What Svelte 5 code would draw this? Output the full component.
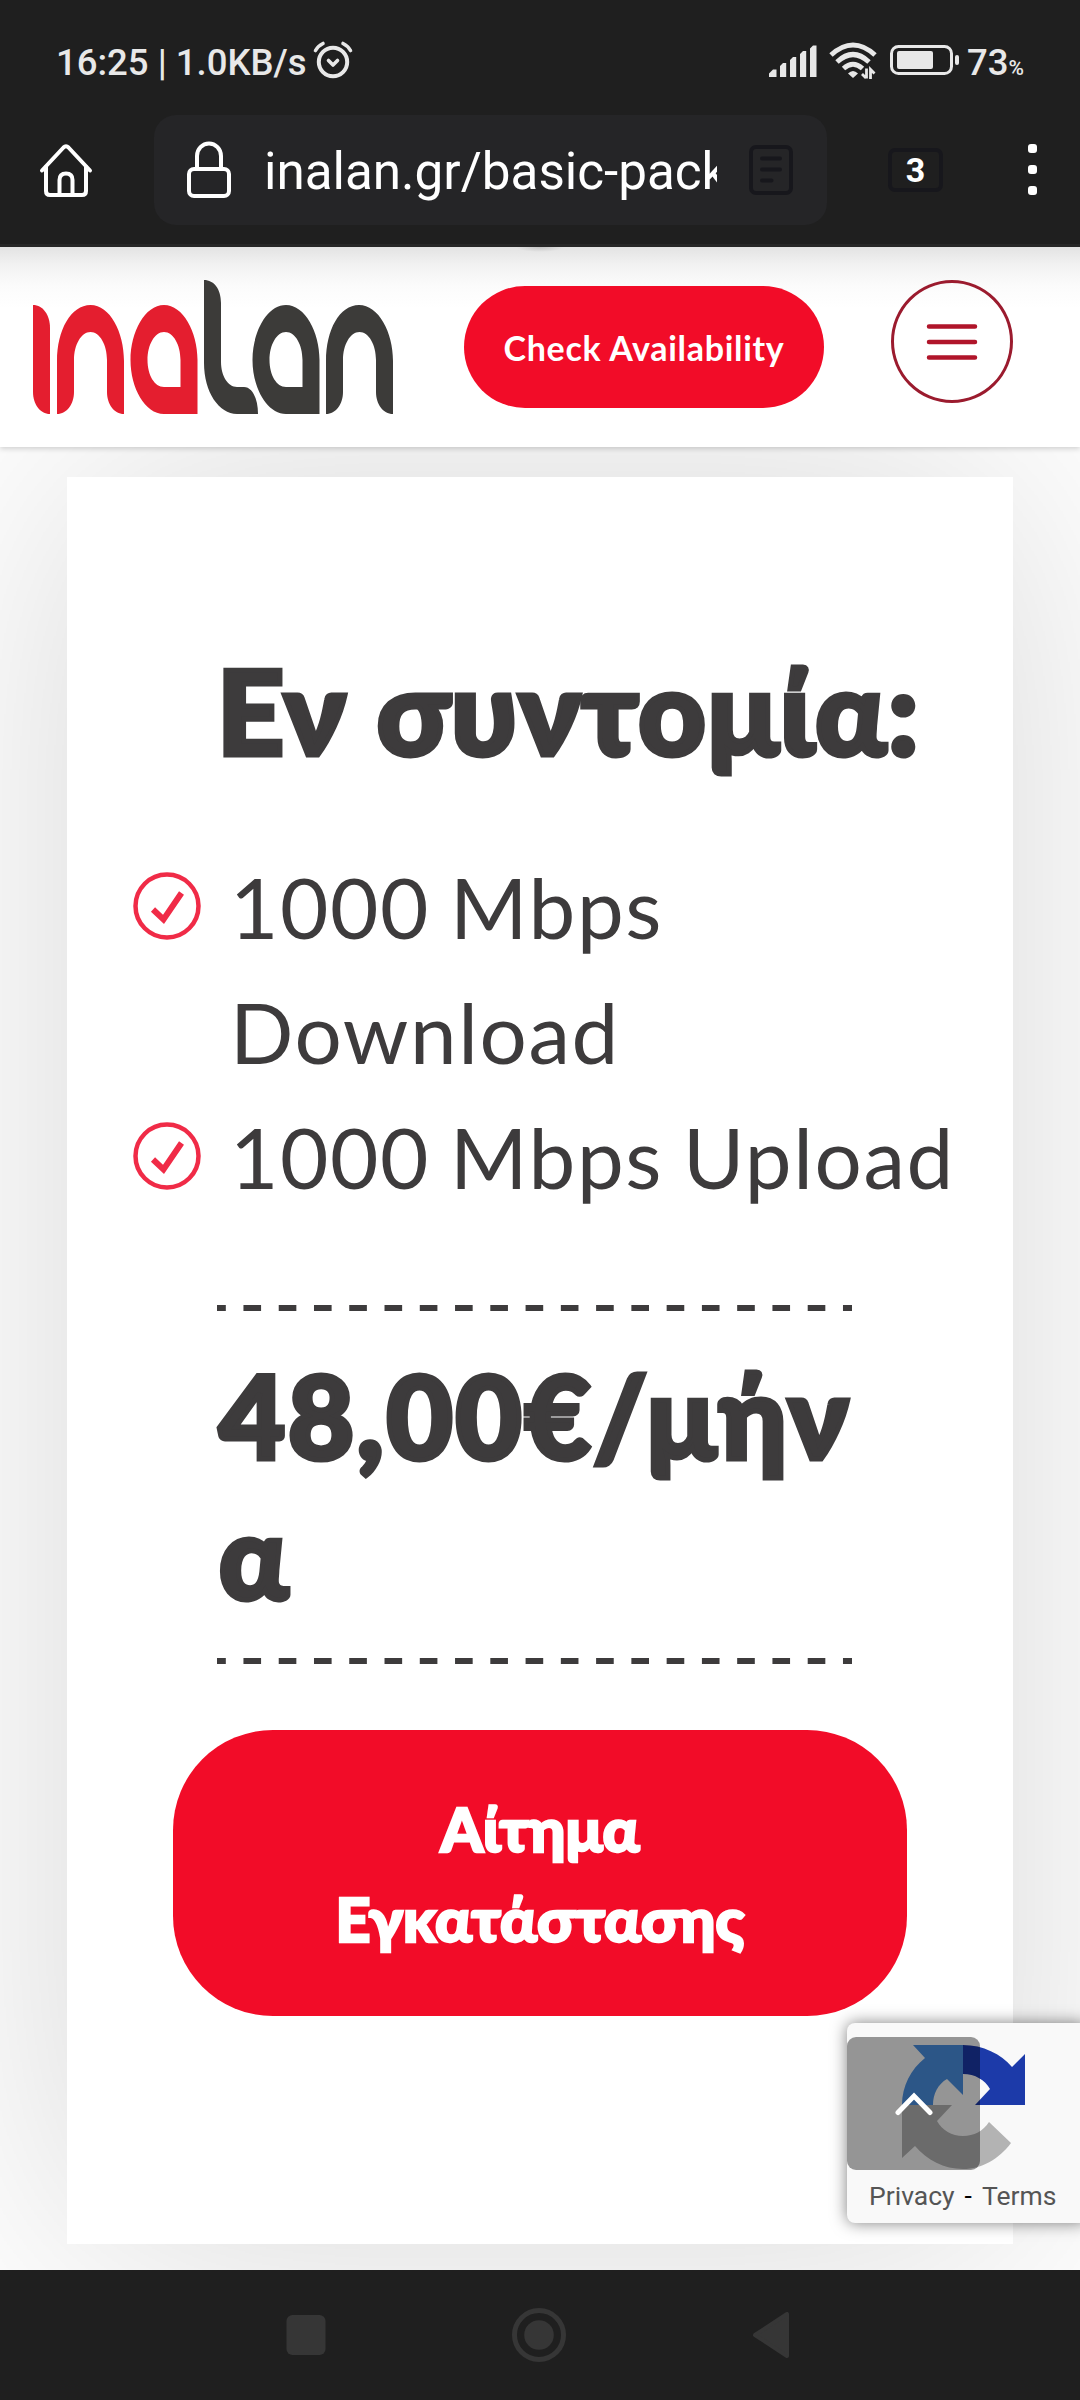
<script lang="ts">
	let url = $state('inalan.gr/basic-pack');
	let tabCount = $state(3);

	const features = ['1000 Mbps Download', '1000 Mbps Upload'];
</script>

<div class="screen">
	<div class="status-bar">
		<span class="clock">16:25 | 1.0KB/s</span>
		<svg class="alarm" width="40" height="38" viewBox="0 0 40 38" fill="none" stroke="#e8e8e8" stroke-linecap="round" stroke-linejoin="round">
			<circle cx="20" cy="21" r="14.2" stroke-width="4" />
			<path d="M15.5 19.5l4.5 4.5 4.5-4.5" stroke-width="3.6" />
			<path d="M2.5 9.5Q5 5 10 2.5M30 2.5Q35 5 37.5 9.5" stroke-width="3.6" />
		</svg>
		<span class="spacer"></span>
		<svg class="signal" width="48" height="32" viewBox="0 0 48 32" fill="#e8e8e8">
			<path d="M0 32v-3.5l4-4h3.5v7.5zM11 32V21l3-3h3.2v14zM21 32V15l3-3h3.2v20zM31 32V9l3-3h3.2v26zM41 32V3.5L44 .5h3.5V32z" />
		</svg>
		<svg class="wifi" width="48" height="37" viewBox="0 0 48 37" fill="none" stroke="#e8e8e8" stroke-width="5">
			<path d="M2 13Q24-7 46 13" />
			<path d="M8 20Q24 5 40 20" />
			<path d="M14.5 26.5Q24 18 33.5 26.5" />
			<path d="M24 36l-5-4.5q5-5 10 0z" fill="#e8e8e8" stroke="none" />
			<path d="M37.5 26.5v10M33 32l4 4M41.5 37V27.5l4 4" stroke-width="2.8" />
		</svg>
		<svg class="battery" width="70" height="30" viewBox="0 0 70 30">
			<rect x="1.5" y="1.5" width="60" height="27" rx="7" fill="none" stroke="#e8e8e8" stroke-width="3" />
			<rect x="7" y="6" width="36" height="18" rx="2" fill="#e8e8e8" />
			<rect x="65" y="10" width="4" height="10" rx="2" fill="#e8e8e8" />
		</svg>
		<span class="level">73<small>%</small></span>
	</div>

	<div class="toolbar">
		<svg class="home" width="54" height="54" viewBox="0 0 54 54" fill="none" stroke="#fff" stroke-width="4" stroke-linecap="round" stroke-linejoin="round">
			<path d="M3 27.5L24.5 4.5q2.5-2.5 5 0L51 27.5" />
			<path d="M7 24v24q0 4 4 4h32q4 0 4-4V24" />
			<path d="M20.5 51V37q0-6.5 6.5-6.5t6.5 6.5v14" />
		</svg>
		<div class="address">
			<svg width="44" height="58" viewBox="0 0 44 58" fill="none" stroke="#fff" stroke-width="4">
				<rect x="2" y="28" width="40" height="27" rx="5" />
				<path d="M10 28V15a12 12.5 0 0 1 24 0v13" />
			</svg>
			<span class="url">{url}</span>
			<svg width="44" height="50" viewBox="0 0 44 50" fill="none" stroke="#17171c" stroke-width="4" stroke-linecap="round">
				<rect x="2" y="2" width="40" height="46" rx="5" />
				<path d="M13 13.5h18M13 24.5h18M13 35.5h9.5" />
			</svg>
		</div>
		<div class="tabs">{tabCount}</div>
		<div class="dots"><i></i><i></i><i></i></div>
	</div>

	<header>
		<svg class="logo" width="361" height="135" viewBox="0 0 361 135">
			<g fill="#e41e2f">
				<path d="M0 25C10 25 17 35 17 48V134C7 134 0 124 0 112z" />
				<path d="M24 134V81C24 50 38 25 57.5 25S91 52 91 81v53C81 134 74 124 74 112V80c0-15-7-28-16.5-28S41 65 41 80v32c0 12-7 22-17 22z" />
				<path fill-rule="evenodd" d="M164.5 134H131C112 134 97.5 108 97.5 80S112 25 131 25s33.5 27 33.5 55zM147.5 107V80c0-15-7-28-16.5-28s-16.5 13-16.5 28 7 27 16.5 27z" />
			</g>
			<g fill="#3c3b39">
				<path d="M171 0c10 0 17 9 17 23v59c0 14 7 25 16 25h7c8 0 14 11 14 27h-21c-18 0-33-22-33-51z" />
				<path fill-rule="evenodd" d="M286.5 134H253c-19 0-33.5-26-33.5-54S234 25 253 25s33.5 27 33.5 55zM269.5 107V80c0-15-7-28-16.5-28s-16.5 13-16.5 28 7 27 16.5 27z" />
				<path d="M293 134V81c0-31 13.5-56 33-56s34 27 34 56v53c-10 0-17-10-17-22V80c0-15-7-28-16.5-28S310 65 310 80v32c0 12-7 22-17 22z" />
			</g>
		</svg>
		<button class="check">Check Availability</button>
		<button class="menu" aria-label="Menu">
			<svg width="52" height="38" viewBox="0 0 52 38" stroke="#b0152a" stroke-width="4.5" stroke-linecap="round">
				<path d="M3 3.5h46M3 19h46M3 34.5h46" />
			</svg>
		</button>
	</header>

	<main>
		<section class="card">
			<h2>Εν συντομία:</h2>
			<ul>
				{#each features as feature}
					<li>
						<svg width="68" height="68" viewBox="0 0 68 68" fill="none" stroke="#f02b47">
							<circle cx="34" cy="34" r="31.5" stroke-width="4.5" />
							<path d="M20 37.5l10.5 10L48.5 21" stroke-width="6" />
						</svg>
						<span>{feature}</span>
					</li>
				{/each}
			</ul>
			<div class="price"><span>48,00€/μήνα</span></div>
			<button class="request">Αίτημα<br />Εγκατάστασης</button>
		</section>

		<div class="recaptcha">
			<svg width="124" height="128" viewBox="0 0 124 128">
				<path fill="#1c3aa9" d="M61 1c20 0 38 9 49 22L123 10v51H73l15-16c-5-9-15-15-27-15z" />
				<path fill="#4a90e2" d="M61 1H11l12 13C9 25 0 42 0 61h31c0-11 5-21 14-26l16 16z" />
				<path fill="#b3b3b3" d="M0 61h50L35 77c5 9 15 15 26 15s20-5 26-14l22 21C97 115 80 125 61 125c-19 0-36-9-48-23L0 114z" />
			</svg>
			<p><a href="#privacy">Privacy</a><b>-</b><a href="#terms">Terms</a></p>
			<button class="to-top" aria-label="Scroll to top">
				<svg width="38" height="24" viewBox="0 0 38 24" fill="none" stroke="#fff" stroke-width="5" stroke-linecap="round">
					<path d="M3 20.5L19 4l16 16.5" />
				</svg>
			</button>
		</div>
	</main>

	<nav>
		<svg width="40" height="40" viewBox="0 0 40 40"><rect x=".5" width="39" height="40" rx="6" fill="#363636" /></svg>
		<svg width="54" height="54" viewBox="0 0 54 54">
			<circle cx="27" cy="27" r="24.5" fill="none" stroke="#363636" stroke-width="5" />
			<circle cx="27" cy="27" r="14.8" fill="#363636" />
		</svg>
		<svg width="38" height="46" viewBox="0 0 38 46"><path d="M3 23L35 2v42z" fill="#363636" stroke="#363636" stroke-width="4" stroke-linejoin="round" /></svg>
	</nav>
</div>

<style>
	:global(body) {
		margin: 0;
		background: #1f1f1f;
	}

	.screen {
		width: 1080px;
		height: 2400px;
		display: flex;
		flex-direction: column;
		overflow: hidden;
		background: #1f1f1f;
		font-family: Lato, sans-serif;
		color: #3d3b3c;
	}

	svg {
		display: block;
		flex: none;
	}

	button {
		border: none;
		padding: 0;
		font-family: inherit;
	}

	.status-bar {
		height: 105px;
		flex: none;
		display: flex;
		align-items: flex-start;
		padding: 0 54px 0 56px;
		box-sizing: border-box;
		font: 500 36.5px/44px Roboto, sans-serif;
		color: #e8e8e8;
	}

	.clock,
	.level {
		margin-top: 41px;
		white-space: nowrap;
	}

	.level {
		margin-left: 7px;
		width: 59px;
	}

	.level small {
		font-size: 21px;
	}

	.alarm {
		margin: 41px 0 0 6px;
	}

	.spacer {
		flex: 1;
	}

	.signal {
		margin: 45px 12px 0 0;
	}

	.wifi {
		margin: 42px 13px 0 0;
	}

	.battery {
		margin-top: 45px;
	}

	.toolbar {
		height: 142px;
		flex: none;
		box-sizing: border-box;
		display: flex;
		align-items: center;
		padding: 0 43px 10px 39px;
		border-bottom: 3px solid #282828;
	}

	.address {
		width: 673px;
		height: 110px;
		box-sizing: border-box;
		margin: 0 61px;
		padding: 0 33px;
		border-radius: 22px;
		background: #252527;
		display: flex;
		align-items: center;
	}

	.url {
		width: 453px;
		margin: 5px 32px 0 33px;
		flex: none;
		overflow: hidden;
		white-space: nowrap;
		color: #fff;
		font: 400 51.2px/64px Roboto, sans-serif;
	}

	.tabs {
		width: 55px;
		height: 44px;
		box-sizing: border-box;
		border: 4px solid #17171c;
		border-radius: 7px;
		color: #fff;
		text-align: center;
		font: 700 34px/37px Roboto, sans-serif;
	}

	.dots {
		margin-left: auto;
		display: flex;
		flex-direction: column;
		gap: 12px;
	}

	.dots i {
		width: 9px;
		height: 9px;
		border-radius: 3px;
		background: #fff;
	}

	header {
		position: relative;
		z-index: 1;
		height: 200px;
		flex: none;
		box-sizing: border-box;
		display: flex;
		align-items: flex-start;
		padding: 33px 67px 0 33px;
		background:
			radial-gradient(ellipse 24px 5px at 540px 0, rgba(0, 0, 0, 0.14), transparent),
			linear-gradient(#e3e3e3, #f2f2f2 18px, #fbfbfb 38px, #fff 62px);
		box-shadow: 0 2px 5px rgba(0, 0, 0, 0.16);
	}

	.check {
		width: 360px;
		height: 122px;
		margin: 6px 67px 0 70px;
		border-radius: 61px;
		background: #f20c28;
		color: #fff;
		font-size: 34px;
		font-weight: 700;
		letter-spacing: 0.7px;
	}

	.menu {
		width: 122px;
		height: 123px;
		border: 3px solid #9b1b2e;
		border-radius: 50%;
		background: none;
		display: flex;
		align-items: center;
		justify-content: center;
	}

	main {
		position: relative;
		flex: 1;
		padding: 30px 67px 0;
		overflow: hidden;
		background: #fff;
	}

	.card {
		height: 1767px;
		box-sizing: border-box;
		padding: 157px 55px 0 66px;
		background: #fff;
		box-shadow: 0 0 275px rgba(0, 0, 0, 0.16);
	}

	h2 {
		margin: 0 0 0 84px;
		font-size: 117px;
		font-weight: 900;
		line-height: 152px;
		letter-spacing: 1.7px;
		white-space: nowrap;
		-webkit-text-stroke: 5px #3d3b3c;
	}

	ul {
		list-style: none;
		margin: 59px 0 0;
		padding: 0;
	}

	li {
		display: flex;
		font-size: 83.5px;
		line-height: 125px;
	}

	li svg {
		margin-top: 27px;
	}

	li span {
		margin-left: 29px;
		width: 740px;
		letter-spacing: 1.6px;
		word-spacing: -3px;
	}

	.price {
		width: 635px;
		margin: 85px 0 66px 84px;
		padding: 40px 0 39px;
		font-size: 114px;
		font-weight: 900;
		line-height: 140px;
		letter-spacing: 2.8px;
		-webkit-text-stroke: 5px #3d3b3c;
		/* dashed rules above and below, half a dash at each end */
		--dash: linear-gradient(90deg, #3d3b3c 9px, transparent 9px, transparent 26.3px, #3d3b3c 26.3px);
		background: var(--dash) 0 0 / 35.28px 6px repeat-x, var(--dash) 0 100% / 35.28px 6px repeat-x;
	}

	.price span {
		display: block;
		width: 645px;
		margin-left: 2px;
		word-break: break-all;
	}

	.request {
		display: block;
		width: 734px;
		height: 286px;
		margin-left: 40px;
		padding-top: 2px;
		border-radius: 100px;
		background: #f20c28;
		color: #fff;
		font-size: 61px;
		font-weight: 900;
		line-height: 90px;
		-webkit-text-stroke: 2.5px #fff;
	}

	.recaptcha {
		position: absolute;
		left: 847px;
		top: 1576px;
		width: 240px;
		height: 200px;
		border-radius: 8px;
		background: #f9f9f9;
		box-shadow: 0 0 16px rgba(0, 0, 0, 0.5);
	}

	.recaptcha > svg {
		margin: 21px 0 0 55px;
	}

	.recaptcha p {
		margin: 8px 0 0 22px;
		display: flex;
		font: 400 26.5px/32px Roboto, sans-serif;
	}

	.recaptcha a {
		color: #555;
		text-decoration: none;
	}

	.recaptcha b {
		margin: 0 10px;
		font-weight: 400;
		color: #000;
	}

	.to-top {
		position: absolute;
		left: 0;
		top: 14px;
		width: 133px;
		height: 133px;
		border-radius: 9px;
		background: rgba(0, 0, 0, 0.4);
		display: flex;
		align-items: center;
		justify-content: center;
	}

	nav {
		height: 130px;
		flex: none;
		box-sizing: border-box;
		display: flex;
		align-items: center;
		justify-content: space-between;
		padding: 0 290px 0 286px;
	}
</style>
